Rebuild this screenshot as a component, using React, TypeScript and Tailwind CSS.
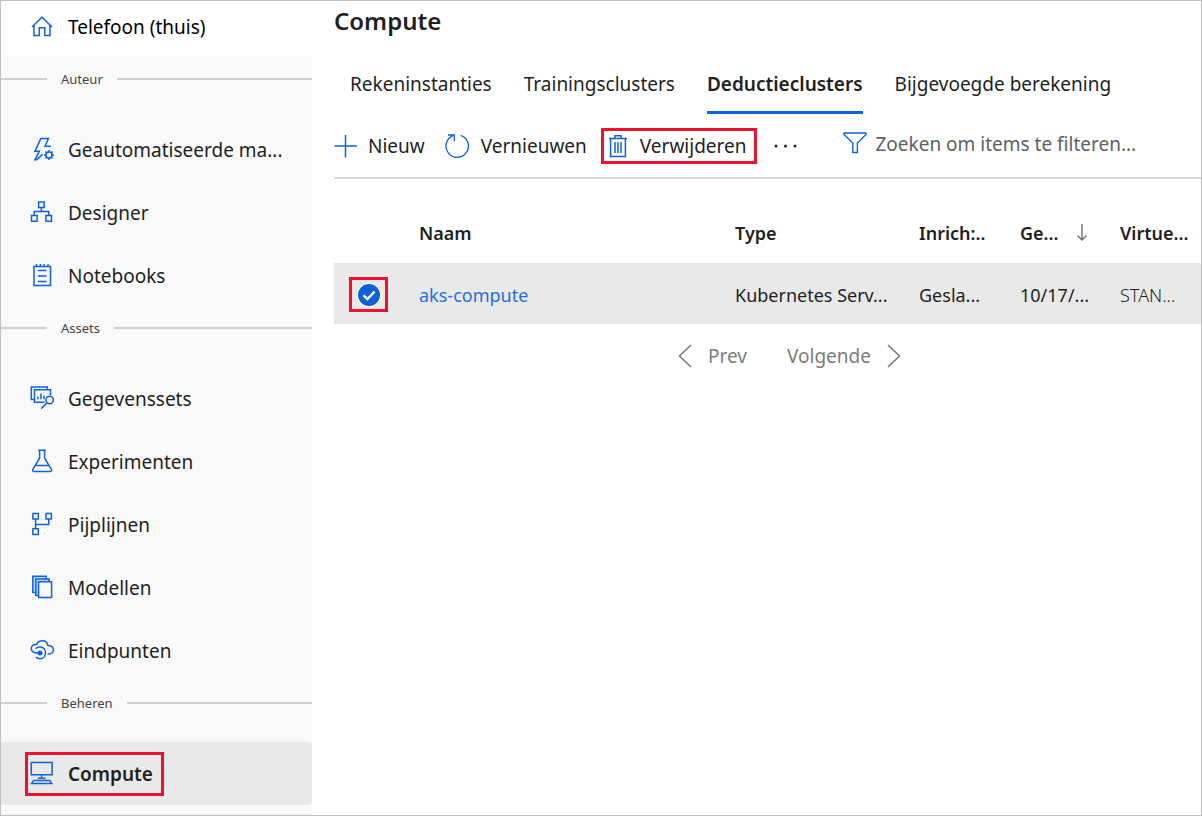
import React from "react";

type IconProps = { children: React.ReactNode; className?: string; strokeWidth?: number };

function Icon({ children, className = "", strokeWidth = 1.5 }: IconProps) {
  return (
    <svg
      aria-hidden="true"
      viewBox="0 0 24 24"
      className={`size-6 shrink-0 text-[#0f62dc] ${className}`}
      fill="none"
      stroke="currentColor"
      strokeWidth={strokeWidth}
    >
      {children}
    </svg>
  );
}

const HomeIcon = (
  <Icon>
    <path d="M2 12 12 2.2 22 12M4 10.2v10.3h5.2v-7.7h5.6v7.7H20V10.2" />
  </Icon>
);
const AutoMlIcon = (
  <Icon>
    <path d="M20.8 9.2H15L18.4 1.6h-7.6L5 14.2h4.3L5 22.8h1.6l6-5.4" />
    <circle cx="19" cy="18" r="3" />
    <path d="M19 15v-2M19 23v-2M16 18h-2M24 18h-2M16.9 15.9l-1.4-1.4M21.1 15.9l1.4-1.4M16.9 20.1l-1.4 1.4M21.1 20.1l1.4 1.4" />
  </Icon>
);
const DesignerIcon = (
  <Icon>
    <path d="M8.6 2h5.6v5.6H8.6zM1.5 15.6h5.6v5.6H1.5zM15.9 15.6h5.6v5.6h-5.6zM11.4 7.6v4M4.3 15.6v-4h14.4v4" />
  </Icon>
);
const NotebookIcon = (
  <Icon>
    <path d="M4 3.5h16.5v19H4zM6.5 1v2.5M10.4 1v2.5M14.2 1v2.5M18 1v2.5M8 7.6h8.5M8 13h8.5M8 18.4h8.5" />
  </Icon>
);
const DatasetIcon = (
  <Icon>
    <path d="M4.2 13.4H1.3V1h16v2.5M14.5 16.2H4.5V3.8h16v5.4M8 13.2V10.4M11 13.2V7.4M14 13.2V9.4" />
    <circle cx="19.6" cy="14" r="3.7" />
    <path d="m17 16.8-5.8 5.8" />
  </Icon>
);
const FlaskIcon = (
  <Icon>
    <path d="M8.2 1.2h7.8M9.6 1.2v8L2.8 20.4c-.6 1.1 0 2.1 1.2 2.1h16.2c1.2 0 1.8-1 1.2-2.1L14.6 9.2v-8M5.6 16.6h13" />
  </Icon>
);
const PipelineIcon = (
  <Icon>
    <path d="M2.9 1.5h5.4v5.6H2.9zM16 1.5h5.4v5.6H16zM2.9 16.8h5.4v5.6H2.9zM5.6 7.1v9.7M18.7 7.1v5.3H5.6" />
  </Icon>
);
const ModelsIcon = (
  <Icon>
    <path fill="#b9d5f7" d="M2.8 1.2h13.4v16.4H2.8z" />
    <path fill="#b9d5f7" d="M5.8 4h13.4v16.4H5.8z" />
    <path fill="#f9f9f9" d="M8.6 6.8h13v15.6h-13z" />
  </Icon>
);
const EndpointIcon = (
  <Icon>
    <path d="M4.6 14.6C2.4 14 1.3 12.4 1.3 10.6c0-2.4 1.9-4.2 4.5-4.2h1C7.7 4.1 9.8 2.7 12.2 2.7c2.9 0 5.2 2 5.7 4.7 3.2 0 5.500 1.800 5.500 4.400 0 2.300-1.900 4.100-4.400 4.100h-1.400" />
    <path d="M5.6 10.600c1.300-1.100 2.800-1.700 4.600-1.600 3.300.2 5.400 2.700 5.400 5.900 0 3.400-2.400 5.800-5.600 5.800-1.600 0-3-.5-4-1.600" />
    <circle cx="10" cy="15" r="2.500" fill="currentColor" stroke="none" />
    <path d="M3.500 14.200c2 1.200 4 1 6.500.8" />
  </Icon>
);
const ComputeIcon = (
  <Icon>
    <path d="M1.3 1.5h20.8v12.3H1.3zM11.6 13.8v3.4M7.8 17.2h7.8M3.600 19.400h16.200l2 3H1.600z" />
  </Icon>
);

type Item = { label: string; icon: React.ReactNode };
const groups: { title: string; items: Item[] }[] = [
  {
    title: "Auteur",
    items: [
      { label: "Geautomatiseerde ma...", icon: AutoMlIcon },
      { label: "Designer", icon: DesignerIcon },
      { label: "Notebooks", icon: NotebookIcon },
    ],
  },
  {
    title: "Assets",
    items: [
      { label: "Gegevenssets", icon: DatasetIcon },
      { label: "Experimenten", icon: FlaskIcon },
      { label: "Pijplijnen", icon: PipelineIcon },
      { label: "Modellen", icon: ModelsIcon },
      { label: "Eindpunten", icon: EndpointIcon },
    ],
  },
  { title: "Beheren", items: [{ label: "Compute", icon: ComputeIcon }] },
];

function ItemContent({ item }: { item: Item }) {
  return (
    <>
      <span className="flex pb-0.5">{item.icon}</span>
      {item.label}
    </>
  );
}

function Sidebar() {
  return (
    <nav className="w-[311px] shrink-0 bg-[#f9f9f9]">
      <a href="#home" className="flex h-[55px] items-center gap-3.5 bg-white pb-1 pl-[29px] text-black">
        {HomeIcon}
        Telefoon (thuis)
      </a>
      <div className="pt-0.5">
        {groups.map((group) => (
          <section key={group.title}>
            <h2 className="mb-[18px] flex h-[42px] items-center gap-3.5 text-[13px] text-[#444]">
              <span className="h-0.5 w-[46px] bg-[#cfcfcf]" />
              {group.title}
              <span className="h-0.5 flex-1 bg-[#cfcfcf]" />
            </h2>
            <ul>
              {group.items.map((item) => {
                const current = item.label === "Compute";
                return (
                  <li key={item.label}>
                    <a
                      href={`#${item.label}`}
                      aria-current={current ? "page" : undefined}
                      className={
                        current
                          ? "flex h-[63px] items-center rounded-r bg-[#e9e9e9] pl-6 font-semibold"
                          : "flex h-[63px] items-center gap-3.5 pl-[29px]"
                      }
                    >
                      {current ? (
                        <span className="flex h-11 items-center gap-3.5 border-3 border-[#ee1130] pr-2 pl-0.5">
                          <ItemContent item={item} />
                        </span>
                      ) : (
                        <ItemContent item={item} />
                      )}
                    </a>
                  </li>
                );
              })}
            </ul>
          </section>
        ))}
      </div>
    </nav>
  );
}

const tabs = ["Rekeninstanties", "Trainingsclusters", "Deductieclusters", "Bijgevoegde berekening"];

function Tabs() {
  return (
    <div role="tablist" className="flex gap-8 pl-4">
      {tabs.map((tab) => (
        <button
          key={tab}
          role="tab"
          aria-selected={tab === "Deductieclusters"}
          className={
            tab === "Deductieclusters"
              ? "h-[60px] border-b-3 border-[#0f62dc] pt-0.5 whitespace-nowrap font-semibold"
              : "h-[60px] border-b-3 border-transparent pt-0.5 whitespace-nowrap"
          }
        >
          {tab}
        </button>
      ))}
    </div>
  );
}

function Toolbar() {
  return (
    <div className="flex h-[65px] items-center border-b-2 border-[#d8d8d8]">
      <button className="flex items-center gap-2.5">
        <Icon>
          <path d="M.5 12H23M11.5 1v22.500" />
        </Icon>
        Nieuw
      </button>
      <button className="ml-5 flex items-center gap-3">
        <Icon strokeWidth={1.3}>
          <path d="M15.6 1.400A11.200 11.200 0 1 1 8 1.700M3 1h6.300v6.300" />
        </Icon>
        Vernieuwen
      </button>
      <button className="ml-3.5 flex h-9 items-center gap-2.5 border-3 border-[#ee1130] pr-2 pl-0.5">
        <Icon>
          <path d="M3 4.4h18M9 4.200V1.800h6v2.400M4.600 4.400v18.200h14.800V4.400M9 8v11M12 8v11M15 8v11" />
        </Icon>
        Verwijderen
      </button>
      <button aria-label="Meer" className="ml-4">
        <svg aria-hidden="true" viewBox="0 0 26 24" className="h-6 w-[26px]" fill="#222">
          <circle cx="3" cy="12" r="1.500" />
          <circle cx="12.500" cy="12" r="1.500" />
          <circle cx="22" cy="12" r="1.500" />
        </svg>
      </button>
      <label className="flex min-w-0 flex-1 items-center gap-2 pb-1 pl-11">
        <Icon strokeWidth={1.4}>
          <path d="M1 1h22v1.500l-8.600 8.600v9.400H9.800v-9.400L1 2.500z" />
        </Icon>
        <input
          type="text"
          aria-label="Zoeken"
          placeholder="Zoeken om items te filteren..."
          className="min-w-0 flex-1 bg-transparent outline-none placeholder:text-[#5c6362] placeholder:opacity-100"
        />
      </label>
    </div>
  );
}

function ComputeTable() {
  return (
    <table className="w-full table-fixed text-left text-lg whitespace-nowrap">
      <colgroup>
        <col className="w-[85px]" />
        <col />
        <col className="w-[184px]" />
        <col className="w-[101px]" />
        <col className="w-[100px]" />
        <col className="w-[81px]" />
      </colgroup>
      <thead>
        <tr className="h-[60px]">
          <td />
          <th className="font-semibold">Naam</th>
          <th className="font-semibold">Type</th>
          <th className="font-semibold">Inrich:..</th>
          <th className="font-semibold" aria-sort="descending">
            <span className="flex items-center justify-between pr-8">
              Ge...
              <svg aria-hidden="true" viewBox="0 0 12 20" className="h-5 w-3" fill="none" stroke="#6d6d6d" strokeWidth="1.400">
                <path d="M6 1v16M1.500 12.500 6 17l4.500-4.500" />
              </svg>
            </span>
          </th>
          <th className="font-semibold">Virtue...</th>
        </tr>
      </thead>
      <tbody>
        <tr className="h-[61px] bg-[#e9e9e9] *:pt-0.5">
          <td className="pl-[15px]">
            <label className="relative flex h-[35px] w-[39px] items-center justify-center border-3 border-[#ee1130]">
              <input
                type="checkbox"
                defaultChecked
                aria-label="aks-compute selecteren"
                className="size-[22px] appearance-none rounded-full bg-[#0f5fd8] ring-1 ring-white"
              />
              <svg
                aria-hidden="true"
                viewBox="0 0 24 24"
                className="pointer-events-none absolute size-6"
                fill="none"
                stroke="white"
                strokeWidth="2.400"
              >
                <path d="m6.500 12.300 3.900 3.800 7.200-7.400" />
              </svg>
            </label>
          </td>
          <td>
            <a href="#aks-compute" className="text-[#1f6fe0]">
              aks-compute
            </a>
          </td>
          <td>Kubernetes Serv...</td>
          <td>Gesla...</td>
          <td>10/17/...</td>
          <td className="font-light">STAN...</td>
        </tr>
      </tbody>
    </table>
  );
}

function Pagination() {
  return (
    <div className="flex h-16 items-center justify-center gap-10 pl-11 text-[#7a7d7c]">
      <button className="flex items-center gap-4">
        <svg aria-hidden="true" viewBox="0 0 14 24" className="h-6 w-3.5" fill="none" stroke="#6f737c" strokeWidth="1.400">
          <path d="M13 1 1.500 12 13 23" />
        </svg>
        Prev
      </button>
      <button className="flex items-center gap-4">
        Volgende
        <svg aria-hidden="true" viewBox="0 0 14 24" className="h-6 w-3.5" fill="none" stroke="#6f737c" strokeWidth="1.400">
          <path d="m1 1 11.500 11L1 23" />
        </svg>
      </button>
    </div>
  );
}

export default function App() {
  return (
    <div className="flex min-h-screen border border-[#bfbfbf] bg-white font-['Noto_Sans',sans-serif] text-[19px] leading-7 text-[#1f1f1f]">
      <Sidebar />
      <main className="min-w-0 flex-1 pl-[22px]">
        <h1 className="h-[53px] pt-1 text-2xl font-semibold">Compute</h1>
        <Tabs />
        <Toolbar />
        <div className="pt-6">
          <ComputeTable />
        </div>
        <Pagination />
      </main>
    </div>
  );
}
